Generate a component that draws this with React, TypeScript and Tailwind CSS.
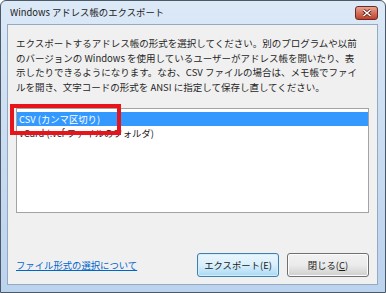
import React from 'react'

const jp = { fontFamily: '"Noto Sans CJK JP", "Liberation Sans", sans-serif' }

export default function App() {
  return (
    <div className="w-[386px] h-[293px] bg-white" style={jp}>
      <div className="w-full h-full flex flex-col rounded-t-[6px] border border-[#4a5868] bg-gradient-to-b from-[#dce9f7] via-[#c9dcf1] to-[#bcd3ee]">
        {/* タイトルバー */}
        <div className="h-[23px] flex items-center justify-between pl-[9px] pr-[7px]">
          <span className="text-[9.4px] text-[#1a1a1a]">Windows アドレス帳のエクスポート</span>
          <CloseButton />
        </div>

        {/* クライアント領域 */}
        <div className="flex-1 ml-[6px] mr-[7px] mb-[7px] bg-[#f0f0f0] border border-[#94a9c2] flex flex-col pt-[11px] pl-[8px] pr-[8px] pb-[7px]">
          <p className="text-[9.5px] leading-[14.7px] text-[#262626] whitespace-nowrap">
            エクスポートするアドレス帳の形式を選択してください。別のプログラムや以前<br />
            のバージョンの Windows を使用しているユーザーがアドレス帳を開いたり、表<br />
            示したりできるようになります。なお、CSV ファイルの場合は、メモ帳でファイ<br />
            ルを開き、文字コードの形式を ANSI に指定して保存し直してください。
          </p>

          {/* リストボックス */}
          <div className="relative mt-[13px] h-[105px] bg-white border border-[#a3a3a3] pt-[3px]">
            <div className="h-[14px] bg-[#3399ff] text-white text-[9.35px] leading-[14px] pl-[2px]">
              CSV (カンマ区切り)
            </div>
            <div className="h-[14px] text-[#222] text-[9.35px] leading-[14px] pl-[2px]">
              vCard (.vcf ファイルのフォルダ)
            </div>
            {/* 赤枠 */}
            <div className="absolute left-[-7px] top-[-5px] w-[111px] h-[31px] border-[4px] border-[#e8141c]" />
          </div>

          <div className="mt-auto flex items-center">
            <a className="text-[9.35px] text-[#0066cc] underline underline-offset-[1px]">ファイル形式の選択について</a>
            <div className="ml-auto flex gap-[8px]">
              <button className="w-[82px] h-[24px] rounded-[3px] border border-[#3c7fb1] bg-gradient-to-b from-[#eaf6fd] via-[#d9f0fc] to-[#a7d9f5] text-[9.35px] text-[#1a1a1a] shadow-[inset_0_0_0_1px_#d6eef9]">
                エクスポート(E)
              </button>
              <button className="w-[82px] h-[24px] rounded-[3px] border border-[#707070] bg-gradient-to-b from-[#f2f2f2] via-[#ebebeb] to-[#cfcfcf] text-[9.35px] text-[#1a1a1a] shadow-[inset_0_0_0_1px_#fcfcfc]">
                閉じる(<span className="underline">C</span>)
              </button>
            </div>
          </div>
        </div>
      </div>
    </div>
  )
}

function CloseButton() {
  return (
    <div className="w-[23px] h-[14px] mt-[1px] rounded-[3px] border border-[#6b2a22] bg-gradient-to-b from-[#e8a493] via-[#d2715c] to-[#c0412a] flex items-center justify-center">
      <svg width="10" height="8" viewBox="0 0 10 8">
        <path d="M1.5 1 L8.5 7 M8.5 1 L1.5 7" stroke="#5a1a12" strokeWidth="3" />
        <path d="M1.5 1 L8.5 7 M8.5 1 L1.5 7" stroke="#ffffff" strokeWidth="1.6" />
      </svg>
    </div>
  )
}
